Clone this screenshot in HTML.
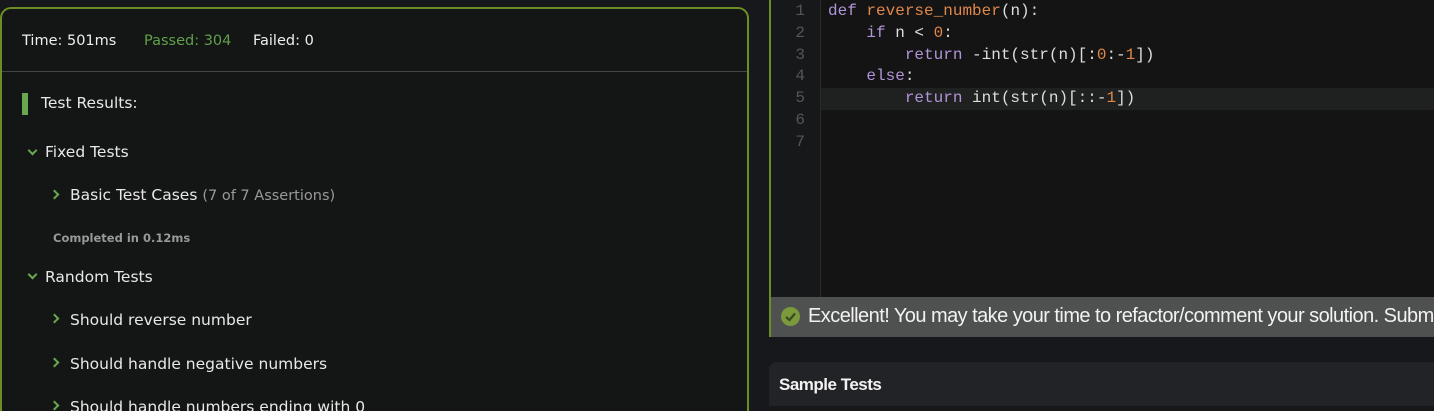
<!DOCTYPE html>
<html><head><meta charset="utf-8"><style>
*{margin:0;padding:0;box-sizing:border-box}
html,body{width:1434px;height:411px;overflow:hidden}
body{background:#17181b;font-family:"DejaVu Sans","Liberation Sans",sans-serif;position:relative;color:#e8e8e8}
.panel{position:absolute;left:0;top:7px;width:749px;height:404px;border:2px solid #6b8e23;border-bottom:none;border-radius:11px 11px 0 0;background:#141515;overflow:hidden}
.hdr{position:absolute;left:0;top:0;width:745px;height:63px;border-bottom:1px solid #444}
.t{position:absolute;white-space:nowrap;font-size:15.5px}
.chev{position:absolute;width:7px;height:7px;border-right:2px solid #6aa84f;border-bottom:2px solid #6aa84f}
.down{transform:rotate(45deg)}
.right{transform:rotate(-45deg)}
.ed{position:absolute;left:769px;top:0;width:665px;height:297px;border-left:2px solid #6b8e23;background:#141414;overflow:hidden}
.gut{position:absolute;left:0;top:0;width:50px;height:297px;background:#17181a;border-right:1px solid #2a2a2a}
.ln{position:absolute;color:#555;font:16px "Liberation Mono",monospace;text-align:right}
.code{position:absolute;left:57px;font:16px/21.8px "Liberation Mono",monospace;color:#ddd;white-space:pre}
.k{color:#b294d9}.f{color:#e0884a}.n{color:#e0884a}
</style></head><body>
<div class="panel">
 <div class="hdr">
  <div class="t" style="left:20px;top:24px;color:#eee;font-size:14.5px">Time: 501ms</div>
  <div class="t" style="left:142px;top:24px;color:#5fa04a;font-size:14.5px">Passed: 304</div>
  <div class="t" style="left:251px;top:24px;color:#eee;font-size:14.5px">Failed: 0</div>
 </div>
 <div style="position:absolute;left:20px;top:84px;width:6px;height:22px;background:#6aa84f"></div>
 <div class="t" style="left:39px;top:85px">Test Results:</div>
 <div class="chev down" style="left:27px;top:138px"></div>
 <div class="t" style="left:43px;top:134px">Fixed Tests</div>
 <div class="chev right" style="left:49px;top:182px"></div>
 <div class="t" style="left:68px;top:177px">Basic Test Cases <span style="color:#999;font-size:14.5px">(7 of 7 Assertions)</span></div>
 <div class="t" style="left:51px;top:222px;font-size:11.5px;font-weight:bold;color:#999">Completed in 0.12ms</div>
 <div class="chev down" style="left:27px;top:262px"></div>
 <div class="t" style="left:43px;top:259px">Random Tests</div>
 <div class="chev right" style="left:49px;top:306px"></div>
 <div class="t" style="left:68px;top:302px">Should reverse number</div>
 <div class="chev right" style="left:49px;top:350px"></div>
 <div class="t" style="left:68px;top:346px">Should handle negative numbers</div>
 <div class="chev right" style="left:49px;top:393px"></div>
 <div class="t" style="left:68px;top:389px">Should handle numbers ending with 0</div>
</div>
<div class="ed">
 <div style="position:absolute;left:50px;top:88px;width:615px;height:22px;background:#1f2020"></div>
 <div class="gut"></div>
 <div class="ln" style="left:0;width:50px;padding-right:16px;top:1px;line-height:21.8px">1<br>2<br>3<br>4<br>5<br>6<br>7</div>
 <div class="code" style="top:1px"><span class="k">def</span> <span class="f">reverse_number</span>(n):
    <span class="k">if</span> n &lt; <span class="n">0</span>:
        <span class="k">return</span> -int(str(n)[:<span class="n">0</span>:-<span class="n">1</span>])
    <span class="k">else</span>:
        <span class="k">return</span> int(str(n)[::-<span class="n">1</span>])
</div>
</div>
<div style="position:absolute;left:769px;top:297px;width:665px;height:40px;background:#4f5150;border-left:2px solid #6b8e23;overflow:hidden">
 <div style="position:absolute;left:10px;top:10px;width:19px;height:19px;border-radius:50%;background:#7a9a3c"></div>
 <svg style="position:absolute;left:10px;top:10px" width="19" height="19"><path d="M5 10 L8.5 13 L14 6.5" stroke="#3a4a20" stroke-width="2.2" fill="none"/></svg>
 <div class="t" style="left:37px;top:8px;font-size:20px;color:#f2f2f2;font-family:'Liberation Sans',sans-serif;letter-spacing:-0.55px">Excellent! You may take your time to refactor/comment your solution. Submit</div>
</div>
<div style="position:absolute;left:769px;top:362px;width:665px;height:49px;background:#222326;border-radius:8px 0 0 0;overflow:hidden">
 <div class="t" style="left:10px;top:13px;font-size:17px;font-weight:bold;color:#f2f2f2;font-family:'Liberation Sans',sans-serif;letter-spacing:-0.5px">Sample Tests</div>
 <div style="position:absolute;left:0;top:44px;width:665px;height:10px;background:#17181a"></div>
</div>
</body></html>
